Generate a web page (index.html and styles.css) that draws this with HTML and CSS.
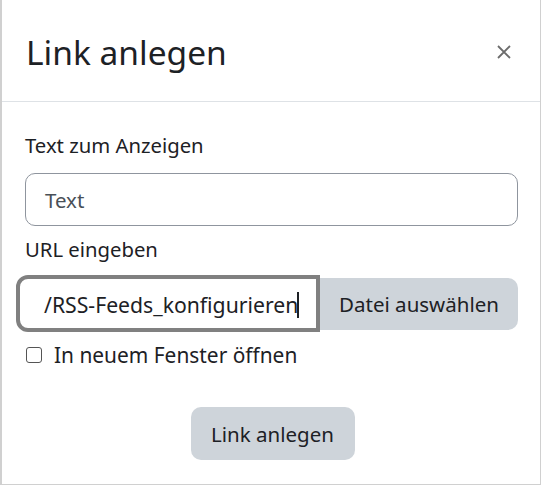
FILE: index.html
```html
<!DOCTYPE html>
<html lang="de">
<head>
  <meta charset="UTF-8">
  <title>Link anlegen</title>
  <link rel="stylesheet" href="styles.css">
</head>
<body>
  <div class="dialog">
    <div class="dialog-header">
      <h1>Link anlegen</h1>
      <button class="close" aria-label="Schließen">
        <svg width="16" height="16" viewBox="0 0 16 16"><path d="M2 2L14 14M14 2L2 14" stroke="#6c6c6c" stroke-width="1.8" fill="none"/></svg>
      </button>
    </div>
    <div class="dialog-body">
      <label class="field-label">Text zum Anzeigen</label>
      <div class="text-input">Text</div>

      <label class="field-label url-label">URL eingeben</label>
      <div class="input-group">
        <div class="url-input">/RSS-Feeds_konfigurieren<span class="caret"></span></div>
        <button class="btn-file">Datei auswählen</button>
      </div>

      <label class="check">
        <span class="box"></span>
        In neuem Fenster öffnen
      </label>

      <div class="actions">
        <button class="btn-submit">Link anlegen</button>
      </div>
    </div>
  </div>
</body>
</html>
```

FILE: styles.css
```css
body {
  margin: 0;
  font-family: 'Noto Sans', sans-serif;
  color: #1d2125;
  background: white;
}
* {
  box-sizing: border-box;
}
.dialog {
  width: 541px;
  height: 485px;
  border: 1px solid #d0d0d0;
  border-top: none;
  border-left-width: 2px;
}
.dialog-header {
  height: 102px;
  border-bottom: 1px solid #dee2e6;
  display: flex;
  align-items: center;
  justify-content: space-between;
  padding: 0 28px 0 24px;
}
h1 {
  margin: 0;
  font-weight: normal;
  font-size: 33.5px;
  margin-top: 2px;
}
.close {
  border: none;
  background: none;
  padding: 0;
  width: 16px;
  height: 16px;
  margin-top: 3px;
}
.dialog-body {
  padding: 28px 22px 0 23px;
}
.field-label {
  display: block;
  font-size: 20.3px;
  line-height: 30px;
  margin-bottom: 13px;
}
.url-label {
  margin-top: 8px;
  margin-bottom: 11px;
}
.text-input {
  height: 53px;
  border: 1px solid #8f959e;
  border-radius: 10px;
  display: flex;
  align-items: center;
  padding-left: 19px;
  font-size: 20.5px;
  color: #495057;
}
.input-group {
  display: flex;
  align-items: center;
  height: 57px;
}
.url-input {
  width: 304px;
  margin-left: -9px;
  height: 57px;
  border: 4px solid #808080;
  border-radius: 12px 0 0 12px;
  display: flex;
  align-items: center;
  padding-left: 24px;
  padding-top: 2px;
  font-size: 21.2px;
  color: #1d2125;
  white-space: nowrap;
}
.caret {
  display: inline-block;
  width: 2px;
  height: 26px;
  background: #1d2125;
  margin-left: -1px;
}
.btn-file {
  flex: 1;
  height: 52px;
  border: none;
  background: #ced4da;
  border-radius: 0 10px 10px 0;
  font-family: inherit;
  font-size: 20.5px;
  color: #1d2125;
  padding: 0;
}
.check {
  display: flex;
  align-items: center;
  gap: 12px;
  margin-top: 9px;
  font-size: 20.9px;
}
.box {
  width: 16px;
  height: 16px;
  border: 1px solid #555;
  border-radius: 3px;
  margin-left: 1px;
}
.actions {
  text-align: center;
  margin-top: 38px;
}
.btn-submit {
  width: 164px;
  height: 53px;
  border: none;
  border-radius: 10px;
  background: #ced4da;
  font-family: inherit;
  font-size: 20.5px;
  color: #1d2125;
  margin-left: 2px;
}
```
